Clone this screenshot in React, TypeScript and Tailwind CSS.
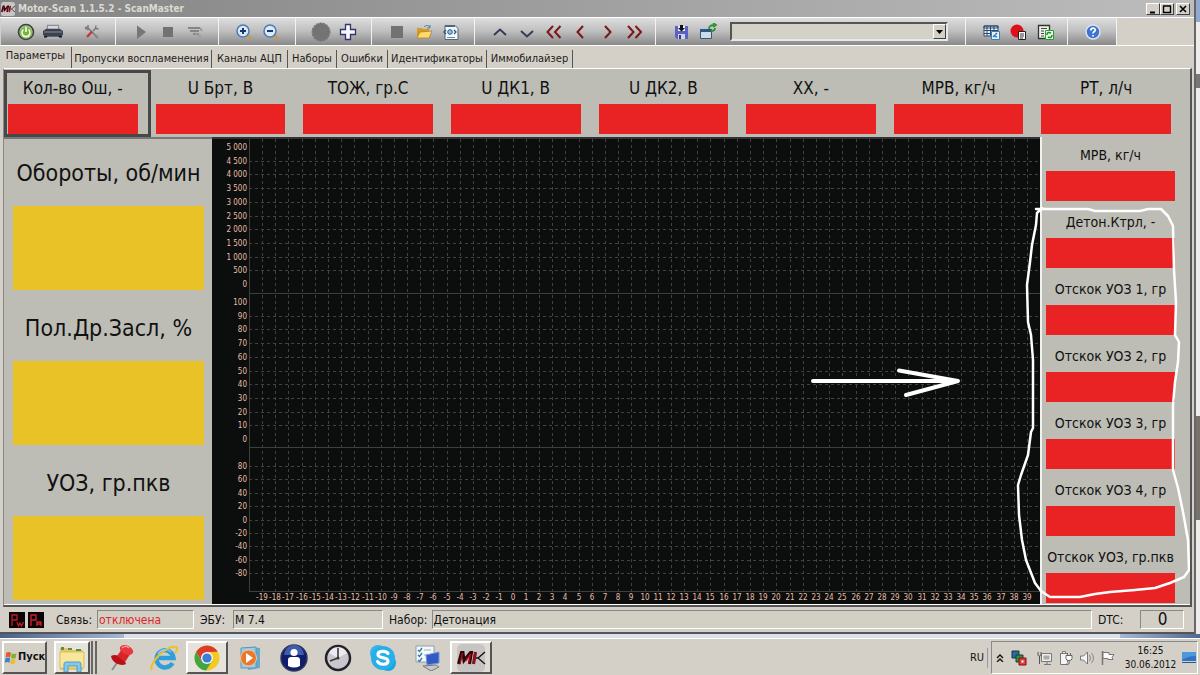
import React from "react";

const TABS = [
  { label: "Параметры", width: "w-[68px]" },
  { label: "Пропуски воспламенения", width: "w-[140px]" },
  { label: "Каналы АЦП", width: "w-[76px]" },
  { label: "Наборы", width: "w-[49px]" },
  { label: "Ошибки", width: "w-[51px]" },
  { label: "Идентификаторы", width: "w-[99px]" },
  { label: "Иммобилайзер", width: "w-[86px]" },
];

const TOP_GAUGES = [
  "Кол-во Ош, -",
  "U Брт, В",
  "ТОЖ, гр.С",
  "U ДК1, В",
  "U ДК2, В",
  "ХХ, -",
  "МРВ, кг/ч",
  "РТ, л/ч",
];

const LEFT_GAUGES = ["Обороты, об/мин", "Пол.Др.Засл, %", "УОЗ, гр.пкв"];

const RIGHT_GAUGES = [
  "МРВ, кг/ч",
  "Детон.Ктрл, -",
  "Отскок УОЗ 1, гр",
  "Отскок УОЗ 2, гр",
  "Отскок УОЗ 3, гр",
  "Отскок УОЗ 4, гр",
  "Отскок УОЗ, гр.пкв",
];

// y is the centre of the first label inside the plot, step is the row pitch
const BANDS = [
  {
    y: 8,
    step: 13.7,
    labels: ["5 000", "4 500", "4 000", "3 500", "3 000", "2 500", "2 000", "1 500", "1 000", "500", "0"],
  },
  {
    y: 163,
    step: 13.7,
    labels: ["100", "90", "80", "70", "60", "50", "40", "30", "20", "10", "0"],
  },
  {
    y: 327,
    step: 13.4,
    labels: ["80", "60", "40", "20", "0", "-20", "-40", "-60", "-80"],
  },
];

const TICKS = Array.from({ length: 59 }, (_, i) => i - 19);

interface IconT {
  children: React.ReactNode;
  size?: string;
  box?: string;
}

const Icon: React.FC<IconT> = ({ children, size = "size-[18px]", box = "0 0 18 18" }) => (
  <svg viewBox={box} className={`${size} shrink-0`} fill="none" aria-hidden="true">
    {children}
  </svg>
);

const MkLogo: React.FC<{ size: string }> = ({ size }) => (
  <svg viewBox="0 0 30 28" className={`${size} shrink-0`} fill="none" aria-hidden="true">
    <rect x="1" width="28" height="28" rx="5" fill="#c6c5c3" />
    <path d="M2.500 20 5.500 8.500h1.500l1 8 6.500-8h1l-2 11.500" stroke="#2a0508" strokeWidth="3" />
    <path d="M4 20 6.500 9M9.500 17l5-7-2 10" stroke="#a80f1c" strokeWidth="1.400" />
    <path d="m19.500 8-2 12" stroke="#8e101a" strokeWidth="3.200" />
    <path d="M20 14h2l7-6M22 14l7 6" stroke="#111" strokeWidth="1.300" />
  </svg>
);

const icons = {
  power: (
    <Icon>
      <circle cx="9" cy="9" r="7.5" fill="#a9bf9c" stroke="#3b463b" strokeWidth="1.6" />
      <circle cx="9" cy="9.5" r="5.8" fill="#79b53a" />
      <path d="M6.5 6.5a4 4 0 1 0 5 0M9 4v5" stroke="#f5ffe8" strokeWidth="1.6" />
    </Icon>
  ),
  printer: (
    <Icon size="size-5">
      <path d="M4 7V3h10v4" fill="#d3d8dd" stroke="#8b9199" />
      <path d="M0 8l3-2h12l3 2v4H0z" fill="#3d434e" />
      <path d="M1 12h16v2H1z" fill="#15181d" />
      <path d="M4 13h10l1 2H3z" fill="#a9b5bd" />
      <path d="M1 9h16" stroke="#7d8796" />
    </Icon>
  ),
  tools: (
    <Icon>
      <path d="m5 5 8 8" stroke="#777" strokeWidth="1.4" />
      <path d="M2 4.5h3V2M2 5l3.5 2M13 2.5l-.5 3 3 .5M12.5 5.5 10 8" stroke="#777" strokeWidth="1.4" />
      <path d="m4 14 5-5.5" stroke="#c53736" strokeWidth="2.4" />
      <path d="m12 12 3 3" stroke="#888" strokeWidth="2.4" />
    </Icon>
  ),
  play: (
    <Icon>
      <path d="m5 2.500 9 6.500-9 7z" fill="#777" />
    </Icon>
  ),
  stop: (
    <Icon>
      <path d="M4 4h10v10H4z" fill="#727272" />
    </Icon>
  ),
  filter: (
    <Icon>
      <path d="M2 5h12M4 8h9M7 11h6" stroke="#858585" strokeWidth="2" />
      <path d="m9 10 6 4M14 5l2 3" stroke="#9a9a9a" strokeWidth="2" />
    </Icon>
  ),
  zoomIn: (
    <Icon>
      <path d="m11.500 11.500 4.500 4.500" stroke="#c79a4c" strokeWidth="2.600" />
      <circle cx="8" cy="8" r="6" fill="#dceaf8" stroke="#4a7abb" strokeWidth="1.500" />
      <path d="M5 8h6M8 5v6" stroke="#18366f" strokeWidth="2" />
    </Icon>
  ),
  zoomOut: (
    <Icon>
      <path d="m11.500 11.500 4.500 4.500" stroke="#c79a4c" strokeWidth="2.600" />
      <circle cx="8" cy="8" r="6" fill="#dceaf8" stroke="#4a7abb" strokeWidth="1.500" />
      <path d="M5 8h6" stroke="#18366f" strokeWidth="2" />
    </Icon>
  ),
  record: (
    <Icon size="size-5">
      <circle cx="9" cy="9" r="8" fill="#747474" stroke="#747474" strokeDasharray="2 1" />
    </Icon>
  ),
  plus: (
    <Icon>
      <path d="M6.500 1.500h5v5h5v5h-5v5h-5v-5h-5v-5h5z" fill="#f7f7ff" stroke="#34346e" strokeWidth="1.300" />
    </Icon>
  ),
  block: (
    <Icon>
      <path d="M3 3h12v12H3z" fill="#727272" />
    </Icon>
  ),
  folder: (
    <Icon>
      <path d="M2 5h5l1 1h6v9H2z" fill="#d29a28" />
      <path d="m5 9 12-1-3 7H2z" fill="#ffd96b" stroke="#b58423" strokeWidth=".8" />
      <path d="M9 4c2-2 4-2 6 0M15 2v3h-3" stroke="#57799c" />
    </Icon>
  ),
  page: (
    <Icon>
      <path d="M3 2.500h10l3 3v11H3z" fill="#f4f9fc" stroke="#52677c" />
      <path d="M3 2h10v2H3z" fill="#52677c" />
      <path d="M4 7 2 9l2 2M12 7l2 2-2 2" stroke="#28567f" strokeWidth="1.300" />
      <circle cx="8" cy="9" r="2.300" fill="#9cc3e2" stroke="#28567f" />
      <path d="M5 14.500h8" stroke="#789" />
    </Icon>
  ),
  up: (
    <Icon>
      <path d="m3 12 6-5.500 6 5.500" stroke="#373b55" strokeWidth="2" />
    </Icon>
  ),
  down: (
    <Icon>
      <path d="m3 8 6 5.500L15 8" stroke="#373b55" strokeWidth="2" />
    </Icon>
  ),
  first: (
    <Icon>
      <path d="M8 3 2.500 9 8 15M15.500 3 10 9l5.500 6" stroke="#7a1719" strokeWidth="2" />
    </Icon>
  ),
  prev: (
    <Icon>
      <path d="M11 3 5.500 9l5.500 6" stroke="#7a1719" strokeWidth="2" />
    </Icon>
  ),
  next: (
    <Icon>
      <path d="m6 3 5.500 6L6 15" stroke="#7a1719" strokeWidth="2" />
    </Icon>
  ),
  last: (
    <Icon>
      <path d="M2 3l5.500 6L2 15M9.500 3l5.500 6-5.500 6" stroke="#7a1719" strokeWidth="2" />
    </Icon>
  ),
  save: (
    <Icon>
      <path d="M3 3h13v13H5l-2-2z" fill="#5a62c4" />
      <path d="M6 3h7v5H6z" fill="#e9ecff" />
      <path d="M8 2h3v3h2L9.500 8.500 6 5h2z" fill="#111" />
      <path d="M6 11h7v5H6z" fill="#cfd3f0" />
      <path d="M7 12h2v4H7z" fill="#333a80" />
    </Icon>
  ),
  windowNew: (
    <Icon>
      <path d="M1.500 6.500h11v9h-11z" fill="#c8dcec" stroke="#3c5575" />
      <path d="M1 6h12v3H1z" fill="#2e568b" />
      <path d="M10 6c0-3 2-4 5-4M14 0l3 2-3 2M16 5c0 3-2 3-4 3" stroke="#2b9631" strokeWidth="1.8" />
    </Icon>
  ),
  table: (
    <Icon>
      <path d="M2 3h14v10H2z" fill="#eef4fb" stroke="#2d4a6c" />
      <path d="M2 3h14v2H2zM2 7.500h14M2 10.500h14M5 3v10M8.500 3v10M12 3v10" stroke="#2d4a6c" />
      <path d="M9.500 8.500h8v8h-8z" fill="#e2effb" stroke="#3d7dbd" />
      <path d="m11 14 4-4M12 13l3 1" stroke="#3d7dbd" strokeWidth="1.5" />
    </Icon>
  ),
  errorList: (
    <Icon>
      <circle cx="8" cy="8" r="6.500" fill="#dd1118" />
      <path d="M9.500 8.500h7v8h-7z" fill="#fff" stroke="#222" />
      <path d="M11 11h4M11 13h4M11 15h3" stroke="#333" />
    </Icon>
  ),
  report: (
    <Icon>
      <path d="M2.500 2.500h11v13h-11z" fill="#eef2ea" stroke="#2b3a2b" strokeWidth="1.3" />
      <path d="M5 5.500h6M5 8h3M5 10.500h3M5 13h3" stroke="#444" />
      <path d="M9.500 7.500h8v9h-8z" fill="#e4fbe2" stroke="#2f9a36" />
      <path d="M11 12c0-3 2-3 4-2M16 12c0 3-2 3-4 2" stroke="#1e8c28" strokeWidth="1.5" />
    </Icon>
  ),
  help: (
    <Icon>
      <circle cx="9" cy="9" r="7" fill="#3f73cf" stroke="#d8e2f3" strokeWidth="1.6" />
      <path d="M6.800 7.500c0-3 4.500-3 4.500-.5 0 1.600-2.300 1.500-2.300 3.500M9 12v1.500" stroke="#fff" strokeWidth="1.7" />
    </Icon>
  ),
};

interface ToolButtonT {
  name: keyof typeof icons;
  label: string;
}

const ToolButton: React.FC<ToolButtonT> = ({ name, label }) => (
  <button type="button" aria-label={label} className="flex h-6 w-[26px] shrink-0 items-center justify-center">
    {icons[name]}
  </button>
);

interface GroupT {
  children: React.ReactNode;
  className: string;
}

const Group: React.FC<GroupT> = ({ children, className }) => (
  <div
    className={`flex items-center gap-px border-r border-[#f2f2f2] bg-linear-to-b from-[#dedede] via-[#bdbdbd] to-[#898989] pl-3 ${className}`}
  >
    {children}
  </div>
);

const TitleBar = () => (
  <header className="flex h-[17px] items-center bg-linear-to-r from-[#848484] to-[#bdbdbd] pr-1">
    <MkLogo size="h-[14px] w-4" />
    <h1 className="flex-1 pl-0.5 text-[10px] leading-4 font-bold text-[#dcdad2]">Motor-Scan 1.1.5.2 - ScanMaster</h1>
    {["Свернуть", "Развернуть", "Закрыть"].map((label, i) => (
      <button
        key={label}
        type="button"
        aria-label={label}
        className={`flex h-3 w-[14px] items-center justify-center border border-t-white border-r-[#404040] border-b-[#404040] border-l-white bg-[#d4d0c8] ${
          i === 2 ? "ml-0.5" : ""
        }`}
      >
        <svg viewBox="0 0 10 10" className="size-[10px]" fill="none" stroke="#000" aria-hidden="true">
          {i === 0 && <path d="M2 8.500h5" strokeWidth="2" />}
          {i === 1 && <path d="M1.500 2v6.500h7V2M1 2h8" strokeWidth="1.400" />}
          {i === 2 && <path d="m2 2 6 6M8 2 2 8" strokeWidth="1.600" />}
        </svg>
      </button>
    ))}
  </header>
);

const Toolbar = () => (
  <div role="toolbar" className="flex h-[29px] border-t border-b border-white pl-px">
    <Group className="w-[115px]">
      <ToolButton name="power" label="Подключить" />
      <ToolButton name="printer" label="Печать" />
      <span className="w-[11px]" />
      <ToolButton name="tools" label="Настройки" />
    </Group>
    <Group className="w-[103px]">
      <ToolButton name="play" label="Пуск" />
      <ToolButton name="stop" label="Стоп" />
      <ToolButton name="filter" label="Фильтр" />
    </Group>
    <Group className="w-[77px]">
      <ToolButton name="zoomIn" label="Увеличить" />
      <ToolButton name="zoomOut" label="Уменьшить" />
    </Group>
    <Group className="w-[76px]">
      <ToolButton name="record" label="Запись" />
      <ToolButton name="plus" label="Добавить" />
    </Group>
    <Group className="w-[103px]">
      <ToolButton name="block" label="Остановить запись" />
      <ToolButton name="folder" label="Открыть" />
      <ToolButton name="page" label="Просмотр" />
    </Group>
    <Group className="w-[181px]">
      <ToolButton name="up" label="Вверх" />
      <ToolButton name="down" label="Вниз" />
      <ToolButton name="first" label="В начало" />
      <ToolButton name="prev" label="Назад" />
      <ToolButton name="next" label="Вперёд" />
      <ToolButton name="last" label="В конец" />
    </Group>
    <Group className="flex-1 pr-[17px]">
      <ToolButton name="save" label="Сохранить" />
      <ToolButton name="windowNew" label="Новое окно" />
      <div className="relative ml-2 flex h-[19px] flex-1">
        <select
          aria-label="Набор параметров"
          className="h-full w-full appearance-none border-2 border-t-[#555] border-r-[#e8e8e8] border-b-[#e8e8e8] border-l-[#555] bg-[#d4d1c7]"
        />
        <span className="pointer-events-none absolute top-0.5 right-0.5 bottom-0.5 flex w-[13px] items-center justify-center border border-t-white border-r-[#404040] border-b-[#404040] border-l-white bg-[#d4d0c8]">
          <svg viewBox="0 0 7 4" className="h-1 w-[7px]" aria-hidden="true">
            <path d="M0 0h7L3.500 4z" />
          </svg>
        </span>
      </div>
    </Group>
    <Group className="w-[102px]">
      <ToolButton name="table" label="Таблица" />
      <ToolButton name="errorList" label="Ошибки" />
      <ToolButton name="report" label="Отчёт" />
    </Group>
    <Group className="w-[49px]">
      <ToolButton name="help" label="Справка" />
    </Group>
    <div className="w-[77px]" />
  </div>
);

const Tabs = () => (
  <div role="tablist" className="flex h-[22px] items-end pl-1 text-[11px]">
    {TABS.map((tab, i) => (
      <button
        key={tab.label}
        type="button"
        role="tab"
        aria-selected={i === 0}
        className={`shrink-0 border-r border-[#555] text-center whitespace-nowrap text-[#1c1c1c] ${tab.width} ${
          i === 0 ? "h-[21px] pr-1 pb-0.5" : "h-[18px]"
        }`}
      >
        {tab.label}
      </button>
    ))}
  </div>
);

const Chart = () => (
  <svg viewBox="0 0 828 464" className="block w-full" fill="none" role="img" aria-label="График параметров">
    <rect width="828" height="464" fill="#0c0d0d" />
    <g stroke="#42423e" strokeDasharray="3 3">
      {TICKS.map((tick, i) => (
        <path key={tick} d={`M${Math.round(50 + i * 13.19) + 0.5} 0V452`} />
      ))}
      {BANDS.map((band, b) =>
        band.labels.map((label, i) => {
          if (b < 2 && (i === 0 || i === band.labels.length - 1)) return null;
          return <path key={label} d={`M37 ${Math.round(band.y + i * band.step) + 0.5}H828`} />;
        })
      )}
    </g>
    <path d="M37.500 0V452.500M37 154.500H828M37 308.500H828M37 452.500H828" stroke="#394040" />
    <g fill="#e8bfa8" fontSize="8" textAnchor="end">
      {BANDS.map((band) =>
        band.labels.map((label, i) => (
          <text key={label} x="35" y={Math.round(band.y + i * band.step) + 3}>
            {label}
          </text>
        ))
      )}
    </g>
    <g fill="#e8bfa8" fontSize="8" textAnchor="middle">
      {TICKS.map((tick, i) => (
        <text key={tick} x={Math.round(50 + i * 13.19)} y="461">
          {tick}
        </text>
      ))}
    </g>
    <path d="M601 242H744M687 231.500 746 242 694 256" stroke="#fff" strokeWidth="4" strokeLinecap="round" strokeLinejoin="round" />
  </svg>
);

// Freehand loop around the knock control gauges
const Outline = () => (
  <svg
    viewBox="1004 137 186 467"
    className="pointer-events-none absolute top-0 right-0 h-[467px] w-[186px]"
    fill="none"
    aria-hidden="true"
  >
    <path
      d="M1036 209H1088L1095 211H1140L1148 209H1161L1168 216 1173 226 1174 270 1176 302 1175 335 1179 342 1178 362 1175 382 1173 405V470L1178 488 1183 512 1188 540 1189 570 1184 577 1170 583 1155 588 1135 590 1110 592 1095 594 1080 597H1050L1041 591 1035 583 1026 560 1022 540 1019 515 1018 485 1021 475 1028 455 1031 432 1033 428V360L1031 335 1028 322 1027 285 1030 262 1032 245 1036 225 1037 213 1042 208"
      stroke="#fff"
      strokeWidth="2.500"
      strokeLinejoin="round"
      strokeLinecap="round"
    />
  </svg>
);

const Panel = () => (
  <main className="mr-0.5 ml-[3px] flex-1 border-t border-r-2 border-b-2 border-l border-t-white border-r-[#555] border-b-[#555] border-l-[#888] bg-[#bdbdb5] pt-px">
    <section className="grid h-[67px] grid-cols-8 pr-[5px]">
      {TOP_GAUGES.map((name, i) => (
        <div
          key={name}
          className={i === 0 ? "mr-px border-[3px] border-[#484848] pr-[10px] pl-px" : "pt-[3px] pr-[14px] pl-1"}
        >
          <h2 className="h-[31px] text-center text-[17px] leading-[31px] whitespace-nowrap">{name}</h2>
          <div className="h-[30px] bg-[#e92324]" />
        </div>
      ))}
    </section>
    <section className="relative flex border-b border-white">
      <div className="flex w-[208px] shrink-0 flex-col gap-[22px] border-t-2 border-[#777] pt-[18px] pr-2 pb-1 pl-[9px]">
        {LEFT_GAUGES.map((name) => (
          <div key={name}>
            <h2 className="mb-[17px] text-center text-[23px] leading-8 whitespace-nowrap">{name}</h2>
            <div className="h-[84px] bg-[#e8c227]" />
          </div>
        ))}
      </div>
      <div className="flex-1 border-t-2 border-[#333] bg-[#0c0d0d]">
        <Chart />
      </div>
      <div className="flex w-[150px] shrink-0 flex-col gap-[10px] border-l-2 border-[#f1f1ee] pt-[7px] pr-[15px] pl-1">
        {RIGHT_GAUGES.map((name) => (
          <div key={name}>
            <h2 className="mb-[5px] text-center text-[14px] leading-[22px] whitespace-nowrap">{name}</h2>
            <div className="h-[30px] bg-[#e92324]" />
          </div>
        ))}
      </div>
      <Outline />
    </section>
  </main>
);

interface FieldT {
  label: string;
  value: string;
  labelClass: string;
  valueClass: string;
}

const Field: React.FC<FieldT> = ({ label, value, labelClass, valueClass }) => (
  <label className={`flex items-center ${labelClass}`}>
    <span className="shrink-0">{label}</span>
    <input
      readOnly
      value={value}
      className={`ml-auto h-[19px] min-w-0 border border-t-[#888] border-r-white border-b-white border-l-[#888] bg-[#d2cfc5] pl-px outline-none ${valueClass}`}
    />
  </label>
);

const StatusBar = () => (
  <footer className="flex h-[27px] shrink-0 items-center border-b-2 border-[#555] pr-[10px] pl-[9px] text-[12px]">
    <svg viewBox="0 0 36 16" className="h-4 w-9" fill="none" aria-hidden="true">
      <path d="M0 0h16v16H0zM19 0h16v16H19z" fill="#090405" />
      <path d="M3 14V3h5v5H3M8 10l1.500 4 1.500-3 1.500 3 2-4" stroke="#b81b24" strokeWidth="1.400" />
      <path d="M22 14V3h5v5h-5M28 14v-4h4v4M28 12h4" stroke="#d01e27" strokeWidth="1.400" />
    </svg>
    <Field label="Связь:" value="отключена" labelClass="ml-[11px] w-[138px]" valueClass="w-[97px] text-[#e0242c]" />
    <Field label="ЭБУ:" value="М 7.4" labelClass="ml-1.5 w-[183px]" valueClass="w-[150px]" />
    <Field label="Набор:" value="Детонация" labelClass="ml-1.5 flex-1 gap-1" valueClass="w-full" />
    <Field label="DTC:" value="0" labelClass="ml-1.5 w-[86px]" valueClass="w-11 text-center text-[17px]" />
  </footer>
);

const RAISED = "border-2 border-t-white border-r-[#555] border-b-[#555] border-l-white";

const Taskbar = () => (
  <nav className="flex h-[38px] shrink-0 items-center border-t border-white bg-[#d4d0c8] pl-0.5">
    <button type="button" className={`flex h-[33px] w-[45px] items-center text-[11px] font-bold ${RAISED}`}>
      <Icon size="size-[14px]">
        <path d="M3 2c2-1 4-1 6 0L8 8c-2-1-4-1-6 0z" fill="#e35b28" />
        <path d="M10 3c2 1 4 1 6 0l-1 6c-2 1-4 1-6 0z" fill="#79b33c" />
        <path d="M2 9c2-1 4-1 6 0l-1 6c-2-1-4-1-6 0z" fill="#3585ca" />
        <path d="M9 10c2 1 4 1 6 0l-1 6c-2 1-4 1-6 0z" fill="#f0bd28" />
      </Icon>
      Пуск
    </button>
    <button type="button" aria-label="Проводник" className={`ml-[7px] flex h-[33px] w-[36px] items-center justify-center bg-[#e6e3dc] ${RAISED}`}>
      <Icon size="size-7" box="0 0 28 28">
        <path d="M2 4h7l2 2h14v20H2z" fill="#e4c668" />
        <path d="M3 3h3v3H3zM10 4h4v2h-4zM18 5h5v2h-5z" fill="#56933f" />
        <path d="M2 8h24v16H2z" fill="#f8e69a" stroke="#d8bd61" />
        <path d="M6 28v-8q0-2 2-2h13q2 0 2 2v8h-4v-6h-9v6z" fill="#85c7e8" stroke="#4c9cc9" />
      </Icon>
    </button>
    <span className="h-[33px] w-[3px] border-r-2 border-[#666]" />
    <span className="h-[33px] w-1 border-r-2 border-[#666]" />
    <button type="button" aria-label="Заметки" className="ml-[10px] flex w-[30px] justify-center">
      <Icon size="size-7" box="0 0 28 28">
        <path d="m11 16-7 10" stroke="#8b8b8b" strokeWidth="1.800" />
        <path d="M3 12c5-3 13 1 15 8-5 3-14-1-15-8z" fill="#b81218" />
        <path d="m9 12 5-7 9 4-6 9z" fill="#d9252a" />
        <ellipse cx="18.500" cy="6" rx="7" ry="4.500" transform="rotate(25 18.500 6)" fill="#e8383b" />
        <path d="M14 4c2-2 5-2 7 0" stroke="#ff9a96" strokeWidth="1.500" />
      </Icon>
    </button>
    <button type="button" aria-label="Internet Explorer" className="ml-3 flex w-[30px] justify-center">
      <Icon size="size-7" box="0 0 28 28">
        <path d="M22.500 19a8.500 8.500 0 1 1 1-5H9" stroke="#2f9fdc" strokeWidth="4.500" />
        <path d="M2 26C-2 20 16 1 26 3c2 1 1 4-1 6" stroke="#efbf2d" strokeWidth="2.200" />
        <path d="M8 10c3-5 9-6 13-2" stroke="#8bd0f2" strokeWidth="1.200" />
      </Icon>
    </button>
    <button type="button" aria-label="Chrome" className={`ml-[7px] flex h-[33px] w-[42px] items-center justify-center bg-[#e6e3dc] ${RAISED}`}>
      <Icon size="size-[26px]" box="0 0 26 26">
        <circle cx="13" cy="13" r="12.500" fill="#f4c923" />
        <path d="M2.200 6.800A12.500 12.500 0 0 1 23.800 6.800L13 7l-5.200 9z" fill="#db3b2b" />
        <path d="M2.200 6.800A12.500 12.500 0 0 0 12 25.500L18.200 16 7.800 16z" fill="#44a643" />
        <circle cx="13" cy="13" r="6" fill="#f5f5f5" />
        <circle cx="13" cy="13" r="4.600" fill="#3b7cd4" />
      </Icon>
    </button>
    <button type="button" aria-label="Проигрыватель" className="ml-[7px] flex w-[30px] justify-center">
      <Icon size="size-[26px]" box="0 0 26 26">
        <path d="m8 2 15 1v20l-12 2z" fill="#67aace" />
        <path d="m4 3 15-1v21H4z" fill="#9acde5" stroke="#5795b8" />
        <circle cx="11.500" cy="13" r="8" fill="#e8792b" stroke="#f8c59a" />
        <path d="m9 8 7 5-7 5z" fill="#fff" />
      </Icon>
    </button>
    <button type="button" aria-label="Информация" className="ml-3.5 flex w-[30px] justify-center">
      <Icon size="size-7" box="0 0 28 28">
        <circle cx="14" cy="14" r="13" fill="#101d6c" stroke="#333957" strokeWidth="1.500" />
        <path d="M4 11a10 10 0 0 1 20 0z" fill="#425cad" />
        <circle cx="14" cy="8.500" r="3.600" fill="#fff" />
        <path d="M8 22v-6q0-3 3-3h6q3 0 3 3v6q-6 3-12 0z" fill="#fff" />
      </Icon>
    </button>
    <button type="button" aria-label="Часы" className="ml-3.5 flex w-[30px] justify-center">
      <Icon size="size-7" box="0 0 28 28">
        <circle cx="14" cy="14" r="12" fill="#c9c7cd" stroke="#232125" strokeWidth="2.500" />
        <path d="M5 9a10 10 0 0 1 18 0l-9 5z" fill="#eceaf0" />
        <path d="M14 4v10l-8 3" stroke="#333" strokeWidth="1.500" />
        <circle cx="14" cy="14" r="1.500" fill="#333" />
      </Icon>
    </button>
    <button type="button" aria-label="Skype" className="ml-[15px] flex w-[30px] justify-center">
      <Icon size="size-7" box="0 0 28 28">
        <circle cx="9" cy="9" r="8" fill="#35b5ec" />
        <circle cx="19" cy="19" r="8" fill="#1ba3e2" />
        <circle cx="14" cy="14" r="12" fill="#28aee8" />
        <path d="M19 9.500c-2-3-10-3-10 1 0 4.500 10 2 10 6.500 0 4-8 4.500-10.500.5" stroke="#fff" strokeWidth="3.200" strokeLinecap="round" />
      </Icon>
    </button>
    <button type="button" aria-label="Панель управления" className="ml-3.5 flex w-[30px] justify-center">
      <Icon size="size-[27px]" box="0 0 27 27">
        <path d="M2 2h18v16H2z" fill="#f3f8fc" stroke="#8ba0b3" />
        <path d="m4 6 1.500 1.500L8 4M4 11l1.500 1.500L8 9M4 16l1.500 1.500L8 14" stroke="#307f9b" strokeWidth="1.400" />
        <path d="M10 6h7M10 11h4" stroke="#9eb1bd" />
        <path d="m12 11 13-3v11l-12 2z" fill="#315ac5" stroke="#7894d7" />
        <path d="m9 22 13-1 3 2-8 4z" fill="#c3c8cd" stroke="#777" />
      </Icon>
    </button>
    <button type="button" aria-label="Motor-Scan" className={`ml-2 flex h-[33px] w-[42px] items-center justify-center bg-[#dedbd4] ${RAISED}`}>
      <MkLogo size="h-7 w-[30px]" />
    </button>
    <span className="ml-auto border-r border-[#999] pr-[3px] text-[11px] leading-5">RU</span>
    <div className="mr-0.5 ml-[3px] flex h-[33px] w-[207px] items-center border border-t-[#888] border-r-white border-b-white border-l-[#888] pl-1">
      <Icon size="size-2" box="0 0 8 8">
        <path d="m1 4 3-3 3 3M1 8l3-3 3 3" stroke="#111" strokeWidth="1.400" />
      </Icon>
      <span className="w-[7px]" />
      <Icon size="size-4" box="0 0 16 16">
        <path d="M1 1h7v7H1z" fill="#2a6b9c" stroke="#1e3345" />
        <path d="M5 5h7v7H5z" fill="#319044" stroke="#1c4025" />
        <path d="M8 8h7v7H8z" fill="#e04141" stroke="#761316" />
        <path d="M10.500 10.500h2v2h-2z" fill="#fff" />
      </Icon>
      <span className="w-2.5" />
      <Icon size="size-4" box="0 0 16 16">
        <path d="M4.500 3.500h10v8h-10zM7 14.500h7M10 12v2" stroke="#777" fill="#eee" />
        <path d="M6.500 5.500h6v4h-6z" fill="#aaa" />
        <path d="M1 2v3q0 1 1.500 1T4 5V2M2.500 6v8" stroke="#555" />
      </Icon>
      <span className="w-[5px]" />
      <Icon size="size-4" box="0 0 16 16">
        <path d="M2.500 3.500h7v11h-7zM4.500 1.500h3v2h-3z" fill="#f5f5f5" stroke="#777" />
        <path d="M8 5.500h6v3q0 2-3 2t-3-2zM9.500 3v2M12.500 3v2M11 11v3H8" stroke="#666" fill="#fff" />
      </Icon>
      <span className="w-[5px]" />
      <Icon size="size-4" box="0 0 16 16">
        <path d="M1.500 6h3l4-4v12l-4-4h-3z" fill="#f6f6f6" stroke="#777" />
        <path d="M10.500 5q2 3 0 6M12.500 3q4 5 0 10" stroke="#888" />
      </Icon>
      <span className="w-[5px]" />
      <Icon size="size-4" box="0 0 16 16">
        <path d="M2.500 1v14" stroke="#777" strokeWidth="1.500" />
        <path d="M3 2.500h6v2h5l-2 3 1 2H8v-1H3z" fill="#fafafa" stroke="#777" />
      </Icon>
      <time className="ml-2 flex-1 text-center text-[10px] leading-[14px]">
        16:25
        <br />
        30.06.2012
      </time>
      <Icon size="h-4 w-5" box="0 0 18 16">
        <path d="M4 2h14v9H4z" fill="#2e73c6" />
        <path d="M4 2h14v4q-8 0-14 4z" fill="#4b98dc" />
        <path d="M4 12h14v1H4z" fill="#28588f" />
      </Icon>
    </div>
  </nav>
);

const App: React.FC = () => {
  return (
    <div className="flex min-h-screen flex-col bg-[#d4d0c8] font-['DejaVu_Sans_Condensed','Noto_Sans',sans-serif] text-[#111]">
      <div className="flex flex-1">
        <div className="flex min-w-0 flex-1 flex-col border-r-2 border-[#666]">
          <TitleBar />
          <Toolbar />
          <Tabs />
          <Panel />
          <StatusBar />
        </div>
        <div className="flex w-1 flex-col bg-[#eeecea]">
          <div className="h-[22px] bg-[#91a8d0]" />
          <div className="mt-[52px] h-[14px] bg-[#777]" />
          <div className="mt-[328px] h-[104px] bg-[#77736c]" />
        </div>
      </div>
      <div className="flex h-1 justify-between bg-[#dbe1ec]">
        <div className="w-[124px] bg-linear-to-r from-[#48618b] to-[#a7b8d8]" />
        <div className="w-20 bg-linear-to-r from-[#a7b8d8] to-[#526990]" />
      </div>
      <Taskbar />
    </div>
  );
};

export default App;
